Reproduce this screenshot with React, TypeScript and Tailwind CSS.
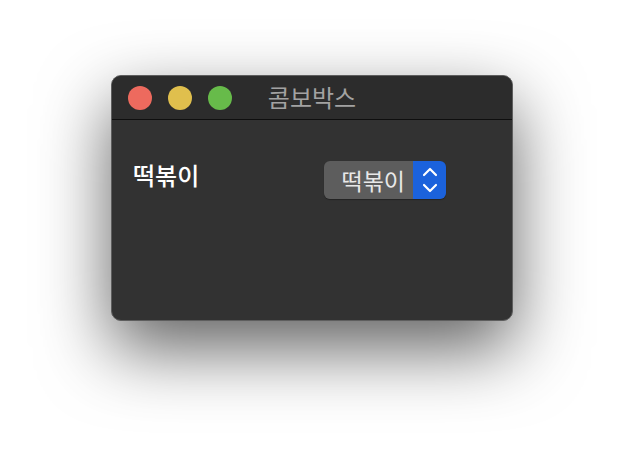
import React from "react";

export default function App() {
  const font = { fontFamily: '"Noto Sans CJK KR", "Noto Sans", sans-serif' };
  return (
    <div className="w-[624px] h-[468px] bg-white pl-[111px] pt-[75px] overflow-hidden" style={font}>
      <div className="w-[402px] h-[246px] rounded-[10px] border border-[#5e5e5e] bg-[#323232] shadow-[0_28px_70px_rgba(0,0,0,0.62)] flex flex-col overflow-hidden">
        <div className="h-[44px] bg-[#2c2c2c] border-b border-[#0e0e0e] flex items-center relative shrink-0">
          <div className="flex items-center gap-4 pl-[16px]">
            <div className="w-[24px] h-[24px] rounded-full bg-[#ed6a5e]" />
            <div className="w-[24px] h-[24px] rounded-full bg-[#e0bf4d]" />
            <div className="w-[24px] h-[24px] rounded-full bg-[#67bb4a]" />
          </div>
          <div className="absolute inset-0 flex items-center justify-center text-[24px] text-[#a2a2a2] leading-none pb-[1px]">
            콤보박스
          </div>
        </div>
        <div className="flex items-start pl-[21px] pt-[41px]">
          <div className="text-[24px] text-white leading-none w-[191px] pt-[2px] font-medium">떡볶이</div>
          <div className="flex h-[38px] w-[122px] rounded-[6px] overflow-hidden shadow-[0_1px_1px_rgba(0,0,0,0.3)]">
            <div className="flex-1 bg-[#5d5d5d] flex items-center justify-end pr-[8px] text-[23px] text-[#e8e8e8] leading-none">
              떡볶이
            </div>
            <div className="w-[33px] bg-[#1b62dc] flex items-center justify-center">
              <svg width="16" height="28" viewBox="0 0 16 28" fill="none" stroke="white" strokeWidth="2.2" strokeLinecap="round" strokeLinejoin="round">
                <path d="M2 9 L8 3 L14 9" />
                <path d="M2 19 L8 25 L14 19" />
              </svg>
            </div>
          </div>
        </div>
      </div>
    </div>
  );
}
